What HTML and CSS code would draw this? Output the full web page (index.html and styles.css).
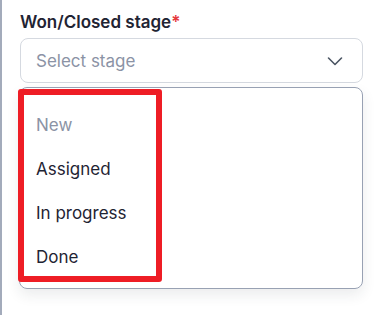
FILE: index.html
```html
<!DOCTYPE html>
<html>

<head>
    <title>Won/Closed stage</title>
    <meta name="viewport" content="width=device-width, minimum-scale=1.0" />
    <link rel="stylesheet" href="styles.css">
</head>

<body>
    <div class="panel">
        <div class="field">
            <label class="field-label">Won/Closed stage<span class="req">*</span></label>
            <div class="select">
                <span class="placeholder">Select stage</span>
                <svg class="chevron" width="16" height="16" viewBox="0 0 16 16" fill="none">
                    <path d="M1.5 5l6.5 6.5 6.5-6.5" stroke="#4b5563" stroke-width="1.6" stroke-linecap="round" stroke-linejoin="round" />
                </svg>
            </div>
            <ul class="menu">
                <li class="disabled">New</li>
                <li>Assigned</li>
                <li>In progress</li>
                <li>Done</li>
            </ul>
            <div class="highlight"></div>
        </div>
    </div>
</body>

</html>
```

FILE: styles.css
```css
html,
body {
    margin: 0;
    padding: 0;
    background: #fff;
}

body {
    font-family: Inter, "Liberation Sans", sans-serif;
    color: #1f2433;
}

.panel {
    border-left: 2px solid #a3abbb;
    min-height: 315px;
    box-sizing: border-box;
    padding: 11px 29px 0 18px;
}

.field {
    position: relative;
}

.field-label {
    display: block;
    font-size: 17px;
    font-weight: 600;
    line-height: 22px;
    margin-bottom: 5px;
    color: #1f2433;
}

.req {
    color: #e5383b;
}

.select {
    display: flex;
    align-items: center;
    justify-content: space-between;
    height: 45px;
    box-sizing: border-box;
    border: 1px solid #d5d9e0;
    border-radius: 8px;
    padding: 0 19px 0 15px;
}

.placeholder {
    font-size: 17px;
    color: #8b93a5;
}

.menu {
    list-style: none;
    margin: 4px 0 0 -1px;
    padding: 15px 0 9px;
    border: 1px solid #98a1b3;
    border-radius: 8px;
    box-shadow: 0 6px 14px rgba(30, 40, 60, 0.09);
}

.menu li {
    height: 44px;
    line-height: 44px;
    padding-left: 16px;
    font-size: 17px;
    color: #1f2433;
}

.menu li.disabled {
    color: #8b93a5;
}

.highlight {
    position: absolute;
    left: -2px;
    top: 78px;
    width: 144px;
    height: 193px;
    box-sizing: border-box;
    border: 6px solid #ee1d25;
    border-radius: 3px;
}
```
